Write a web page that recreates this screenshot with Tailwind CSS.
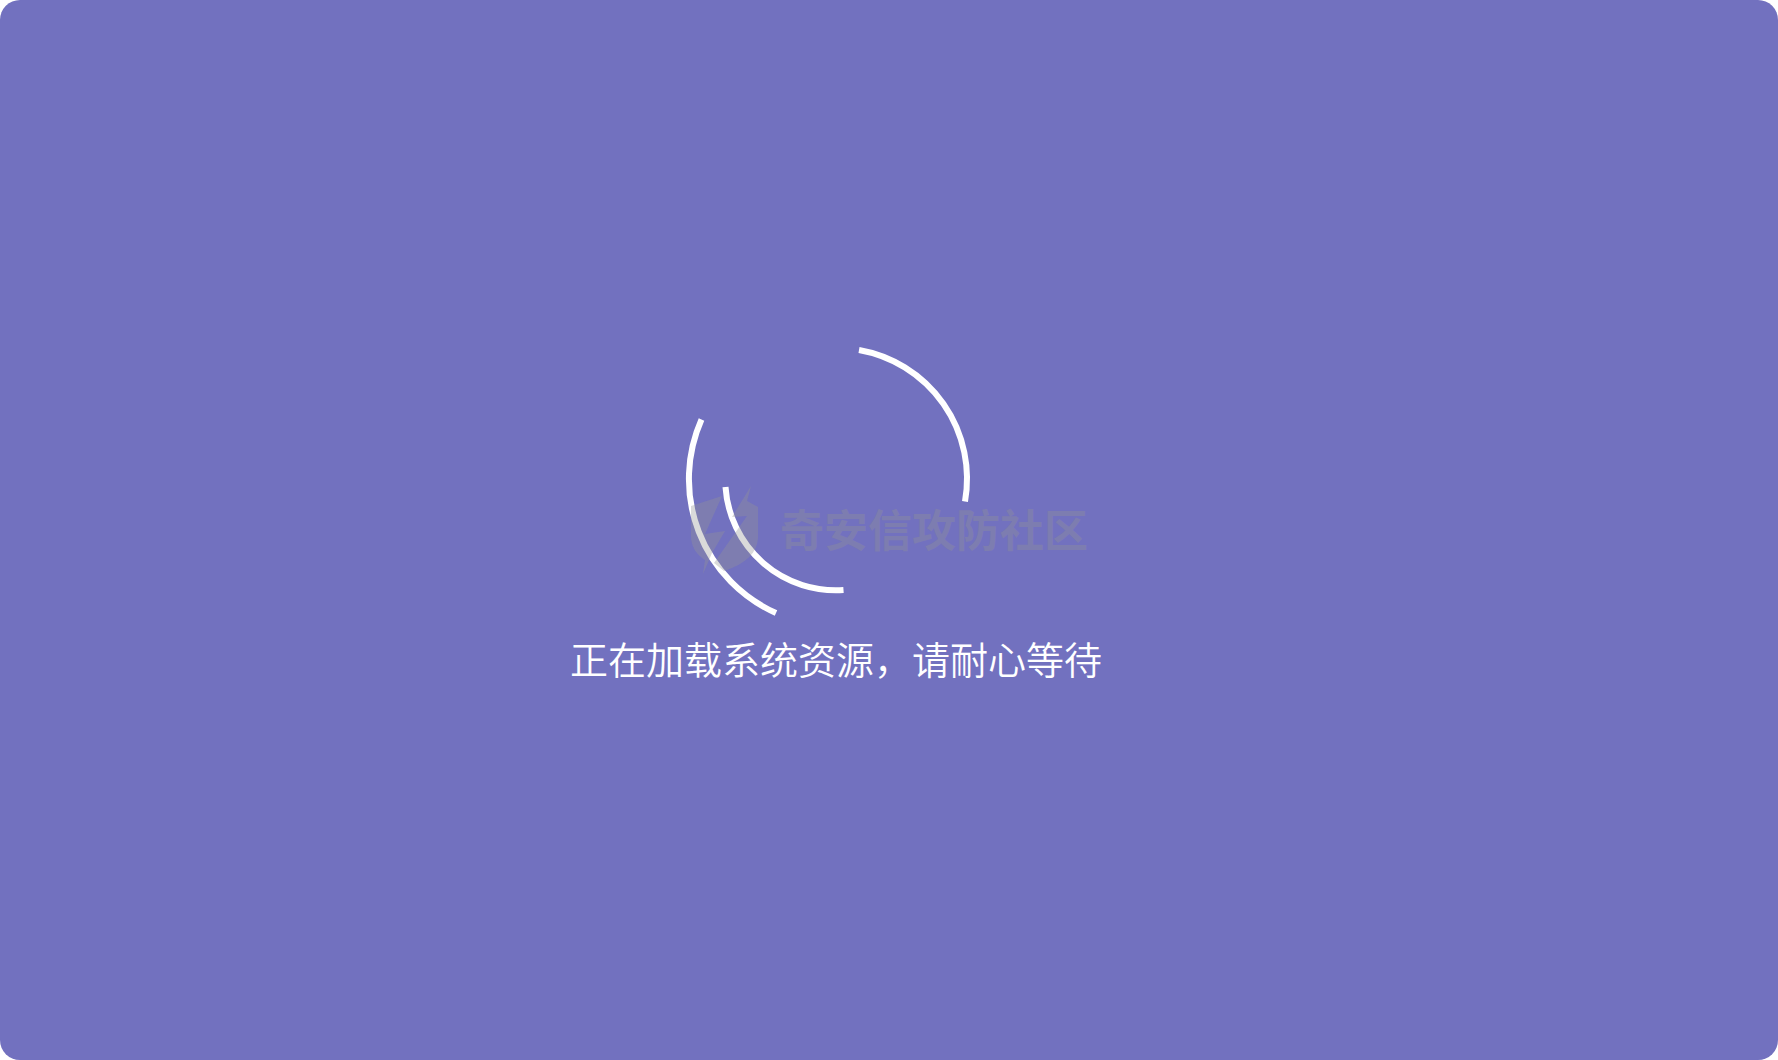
<!DOCTYPE html>
<html lang="zh-CN">
<head>
<meta charset="utf-8">
<title>正在加载系统资源</title>
<script src="https://cdn.jsdelivr.net/npm/@tailwindcss/browser@4"></script>
</head>
<body class="bg-white font-['Noto_Sans_CJK_SC',sans-serif]">
<main class="relative flex min-h-screen flex-col items-center rounded-[20px] bg-[#7271bf] pr-[106px] pt-[329px]">
  <svg class="size-[300px] overflow-visible" viewBox="-150 -150 300 300" fill="none" stroke="#fff" stroke-width="6" role="img" aria-label="加载中">
    <path d="M23 -129A130.700 130.700 0 0 1 129 22.500"/>
    <path d="M-134.500 -59.500A146.700 146.700 0 0 0 -60 134"/>
    <path d="M-110.500 8A110.700 110.700 0 0 0 7.500 111"/>
  </svg>
  <p class="text-[38px] font-[350] leading-[58px] text-white">正在加载系统资源，请耐心等待</p>
  <div class="absolute left-[690px] top-[486px] flex items-start gap-[20px] text-[#949494]/35">
    <svg class="h-[90px] w-[70px]" viewBox="0 0 70 90" fill="currentColor" aria-hidden="true">
      <path d="M1 20L32 10L15 48L35 45L22 67L13 88L15 74Q1 65 1 50Z"/>
      <path d="M61 0L57 15L68 21V52Q67 74 34 85L24 77L57 30L42 31Z"/>
    </svg>
    <span class="text-[44px] font-bold leading-[84px]">奇安信攻防社区</span>
  </div>
</main>
</body>
</html>
